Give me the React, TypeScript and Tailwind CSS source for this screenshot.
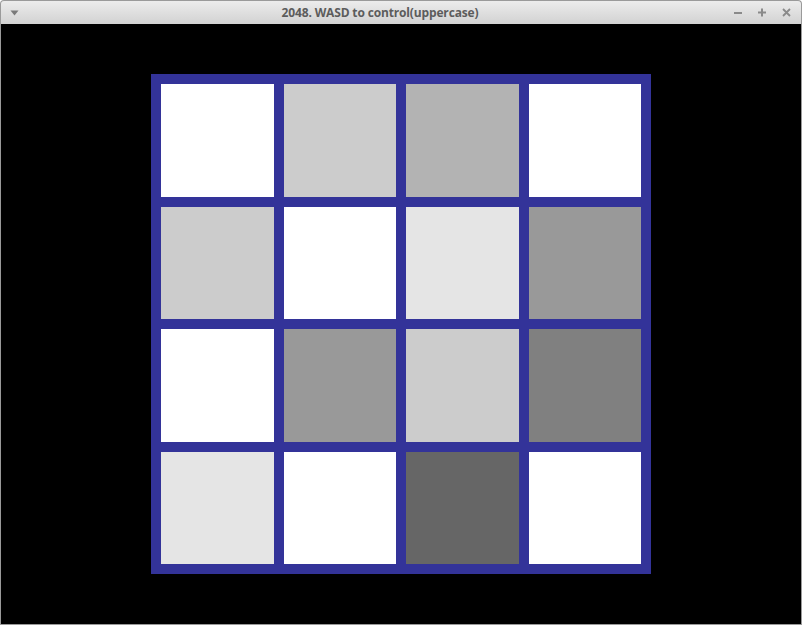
import React from "react";

const rows: string[][] = [
  ["#ffffff", "#cccccc", "#b3b3b3", "#ffffff"],
  ["#cccccc", "#ffffff", "#e5e5e5", "#999999"],
  ["#ffffff", "#999999", "#cccccc", "#808080"],
  ["#e5e5e5", "#ffffff", "#666666", "#ffffff"],
];

export default function App() {
  return (
    <div className="w-[802px] h-[625px] flex flex-col overflow-hidden">
      <div className="h-[24px] shrink-0 flex items-center relative rounded-t-[4px] border border-b-0 border-[#9a9a9a] bg-gradient-to-b from-[#ececec] to-[#d2d2d2]">
        <svg className="absolute left-[9px] top-[9px]" width="9" height="6" viewBox="0 0 9 6">
          <path d="M0.5 0.5 L8.5 0.5 L4.5 5.5 Z" fill="#7a7a7a" />
        </svg>
        <div
          className="flex-1 text-center text-[12px] font-bold text-[#5c5c5c] tracking-[-0.15px] pr-[42px]"
          style={{ fontFamily: '"Open Sans", "Noto Sans", sans-serif' }}
        >
          2048. WASD to control(uppercase)
        </div>
        <div className="absolute right-[10px] top-[7px] flex items-center gap-[15px]">
          <svg width="9" height="9" viewBox="0 0 9 9">
            <rect x="0" y="4" width="8" height="2" fill="#8a8a8a" />
          </svg>
          <svg width="9" height="9" viewBox="0 0 9 9">
            <rect x="0" y="3.5" width="8" height="2" fill="#8a8a8a" />
            <rect x="3" y="0.5" width="2" height="8" fill="#8a8a8a" />
          </svg>
          <svg width="9" height="9" viewBox="0 0 9 9">
            <path d="M1 1 L8 8 M8 1 L1 8" stroke="#8a8a8a" strokeWidth="1.8" />
          </svg>
        </div>
      </div>
      <div className="flex-1 bg-black border border-t-0 border-[#9a9a9a] flex items-center justify-center">
        <div className="w-[500px] h-[500px] bg-[#333399] p-[10px] grid grid-cols-4 grid-rows-4 gap-[10px]">
          {rows.flat().map((c, i) => (
            <div key={i} style={{ backgroundColor: c }} />
          ))}
        </div>
      </div>
    </div>
  );
}
